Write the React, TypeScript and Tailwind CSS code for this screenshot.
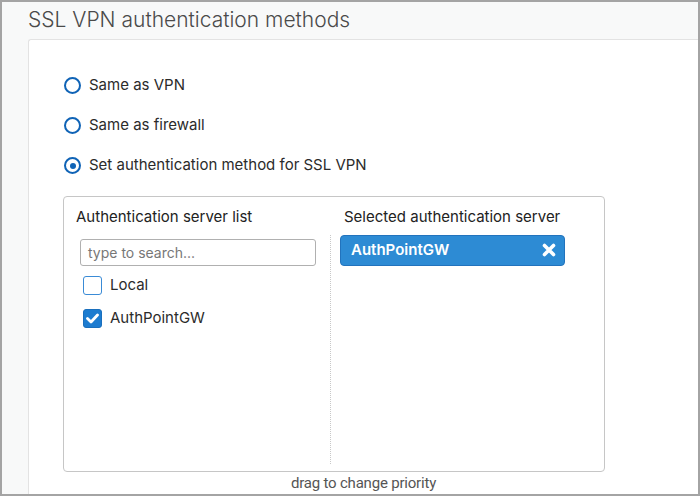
import React from "react";

function Radio({ checked, label }: { checked?: boolean; label: string }) {
  return (
    <div className="flex items-center gap-[8px] h-[20px]">
      <div className="w-[17px] h-[17px] rounded-full border-[2.5px] border-[#0f63b6] flex items-center justify-center bg-white">
        {checked && <div className="w-[6px] h-[6px] rounded-full bg-[#0f63b6]" />}
      </div>
      <span className="text-[15px] text-[#2b2b2b]">{label}</span>
    </div>
  );
}

function Checkbox({ checked, label }: { checked?: boolean; label: string }) {
  return (
    <div className="flex items-center gap-[8px] h-[22px]">
      {checked ? (
        <div className="w-[19px] h-[19px] rounded-[3px] bg-[#1d7cd0] border border-[#1a6fbd] flex items-center justify-center">
          <svg width="13" height="11" viewBox="0 0 13 11">
            <path d="M1.5 5.5 L5 9 L11.5 2" stroke="white" strokeWidth="2.8" fill="none" strokeLinecap="round" strokeLinejoin="round" />
          </svg>
        </div>
      ) : (
        <div className="w-[19px] h-[19px] rounded-[3px] border-[1.5px] border-[#3a8bd6] bg-white" />
      )}
      <span className="text-[15px] text-[#2b2b2b]">{label}</span>
    </div>
  );
}

export default function App() {
  return (
    <div
      className="w-[700px] h-[496px] border-2 border-[#a4a4a4] bg-[#f8f9f9] flex flex-col overflow-hidden"
      style={{ fontFamily: "Inter, 'Open Sans', sans-serif" }}
    >
      <div className="h-[37px] pl-[26px] flex items-center">
        <h1 className="text-[21px] font-light text-[#4a4a4a] tracking-[0px] mt-[-2px]">SSL VPN authentication methods</h1>
      </div>
      <div className="flex-1 ml-[26px] bg-white border-l border-t border-[#e3e3e3] rounded-tl-[3px] pt-[36px]">
        <div className="pl-[34px]">
          <div className="flex flex-col gap-[20px] ml-[1px]">
            <Radio label="Same as VPN" />
            <Radio label="Same as firewall" />
            <Radio checked label="Set authentication method for SSL VPN" />
          </div>
          <div className="mt-[20px] w-[542px] h-[276px] border border-[#c6c6c6] rounded-[4px] flex">
            <div className="w-[266px] pl-[12px] pt-[9px] pr-[14px]">
              <div className="text-[15px] text-[#222] h-[22px] leading-[22px]">Authentication server list</div>
              <div className="mt-[11px] ml-[4px] h-[27px] border border-[#b0b0b0] rounded-[3px] flex items-center px-[7px] text-[14px] text-[#777]">
                type to search...
              </div>
              <div className="mt-[9px] ml-[7px] flex flex-col gap-[11px]">
                <Checkbox label="Local" />
                <Checkbox checked label="AuthPointGW" />
              </div>
            </div>
            <div className="flex flex-col">
              <div className="h-[38px]" />
              <div className="flex-1 mb-[7px] border-l border-dotted border-[#c8c8c8]" />
            </div>
            <div className="flex-1 pl-[9px] pt-[9px] pr-[39px]">
              <div className="text-[15px] text-[#222] h-[22px] leading-[22px] pl-[4px]">Selected authentication server</div>
              <div className="mt-[7px] h-[31px] bg-[#2d8bd4] border border-[#2273bd] rounded-[4px] flex items-center justify-between pl-[10px] pr-[8px]">
                <span className="text-[15px] font-semibold text-white">AuthPointGW</span>
                <svg width="14" height="14" viewBox="0 0 14 14">
                  <path d="M2.5 2.5 L11.5 11.5 M11.5 2.5 L2.5 11.5" stroke="white" strokeWidth="3.6" strokeLinecap="round" />
                </svg>
              </div>
            </div>
          </div>
        </div>
        <div className="text-center text-[15px] text-[#555] mt-[0px] tracking-[-0.2px]" style={{ fontFamily: "Roboto, sans-serif" }}>
          drag to change priority
        </div>
      </div>
    </div>
  );
}
